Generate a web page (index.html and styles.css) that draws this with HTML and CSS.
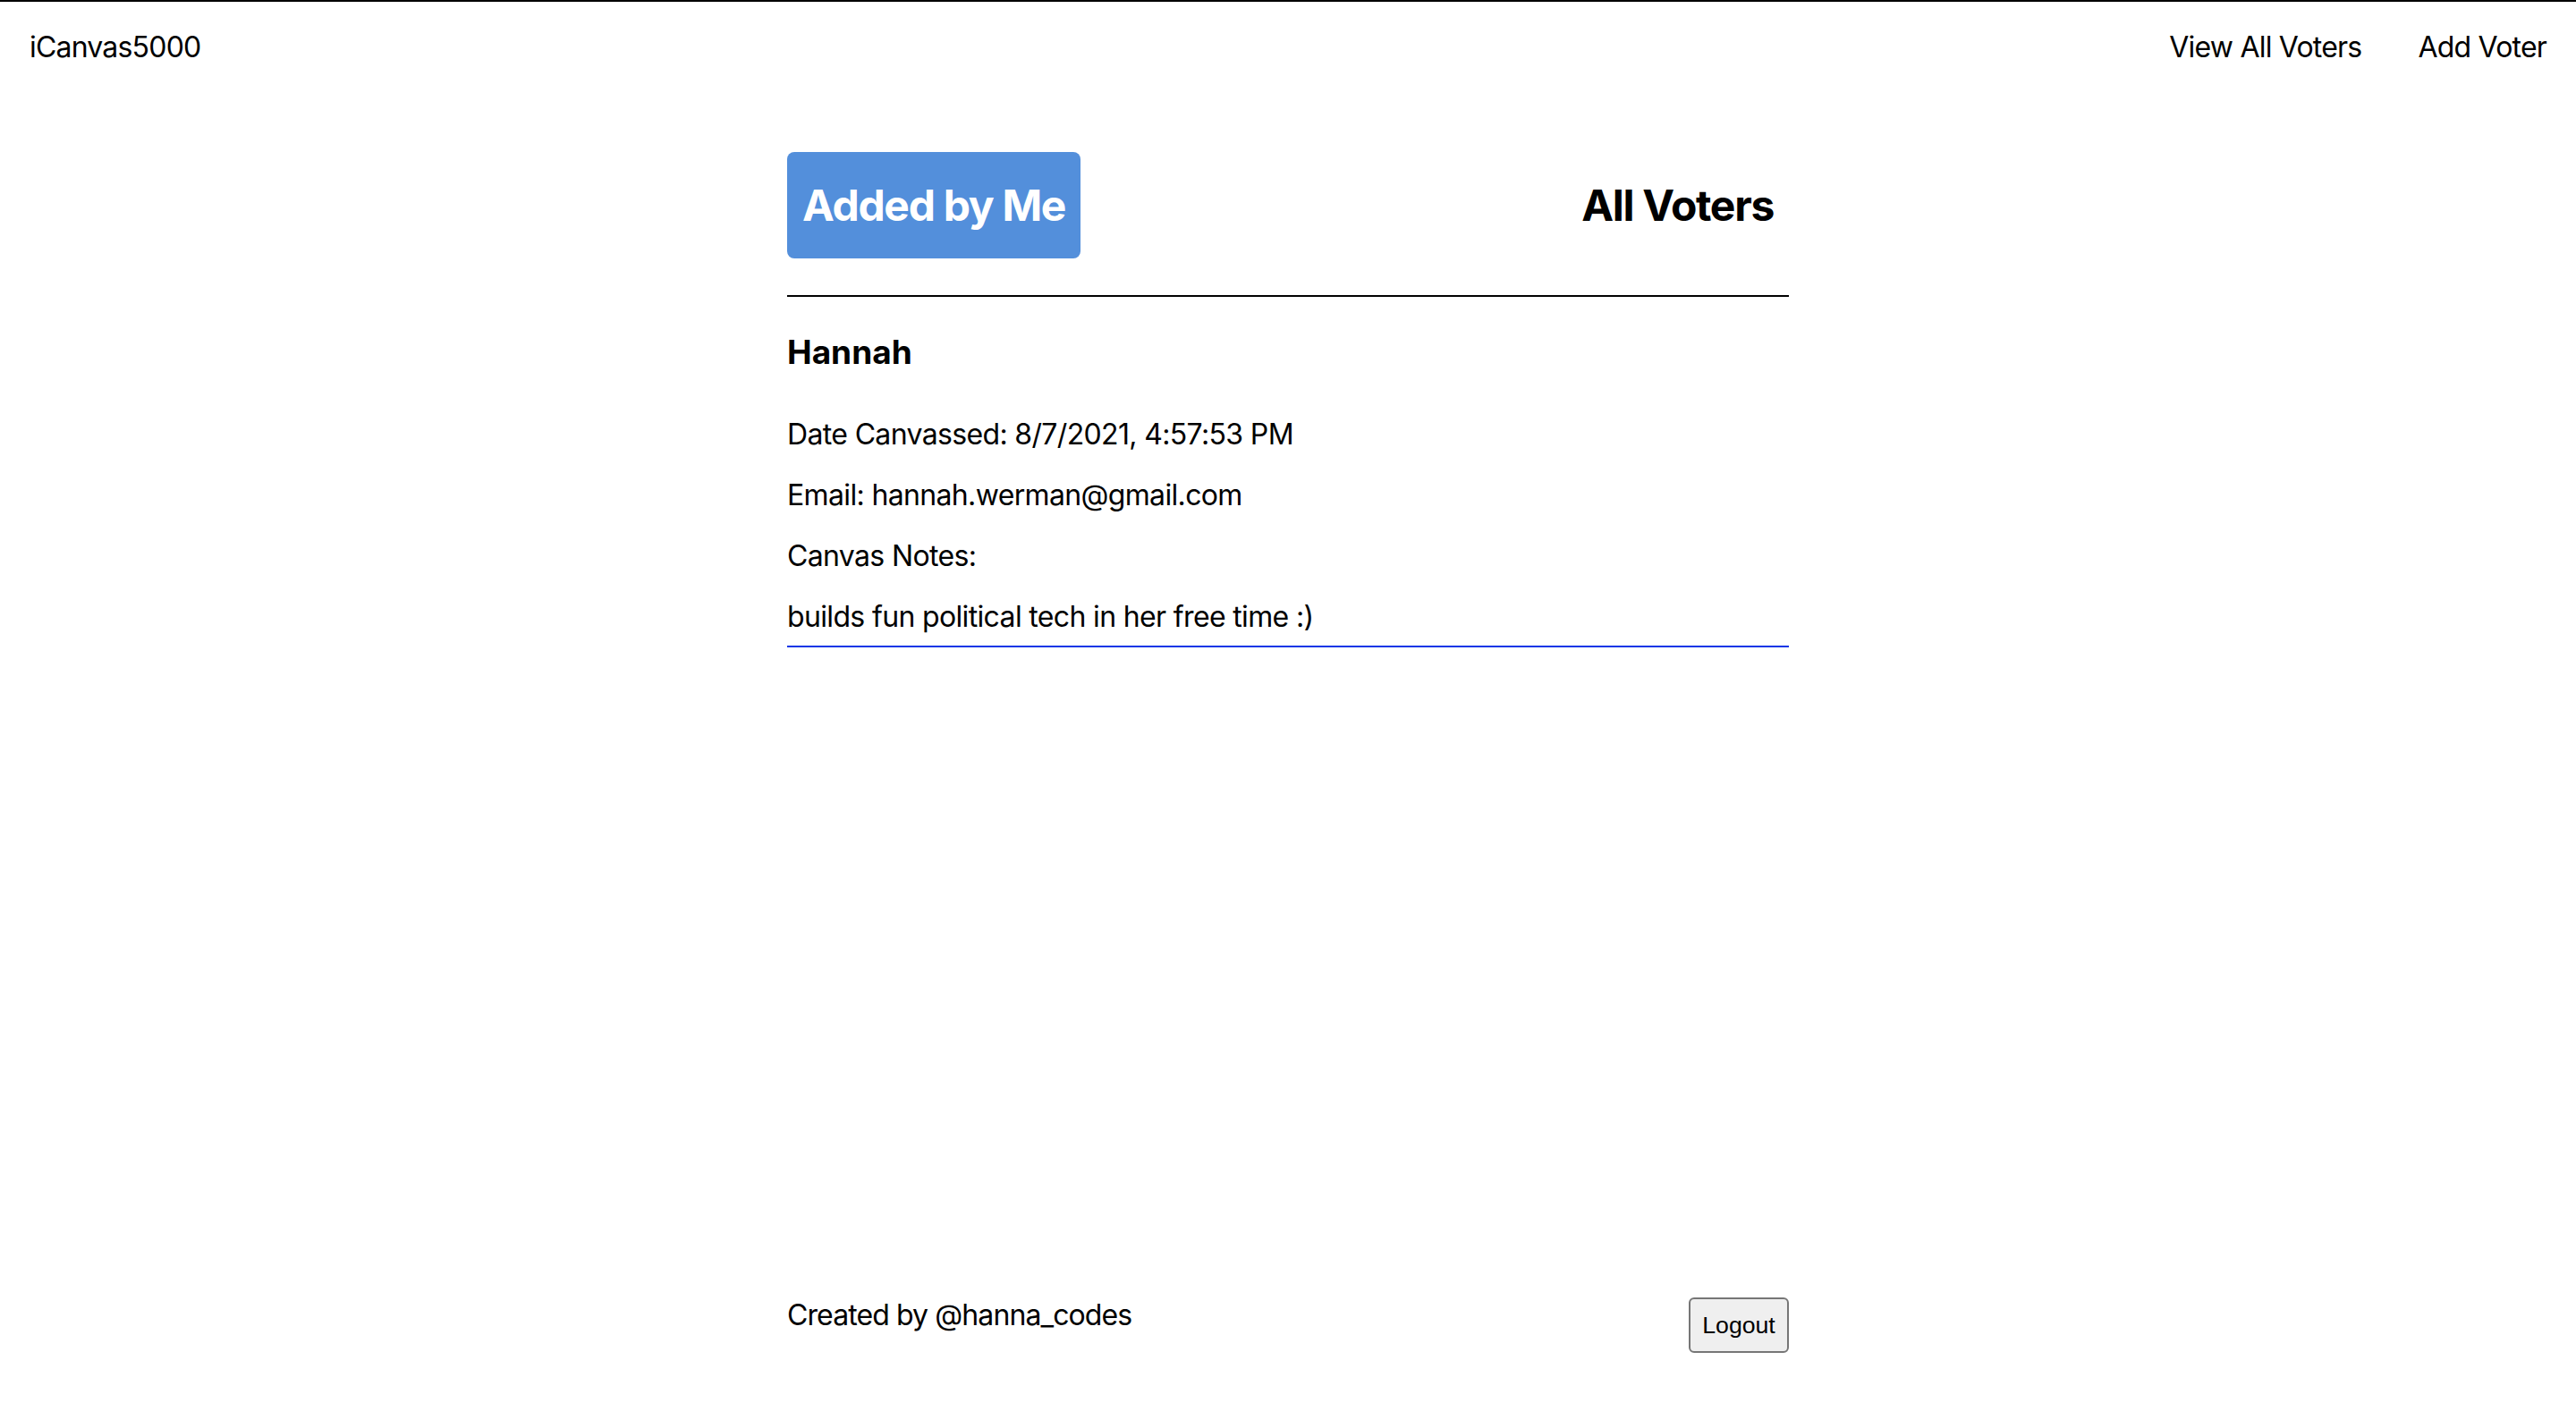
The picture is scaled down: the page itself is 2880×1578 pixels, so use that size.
FILE: index.html
```html
<!DOCTYPE html>
<html lang="en">
<head>
<meta charset="utf-8">
<title>iCanvas5000</title>
<link rel="stylesheet" href="styles.css">
</head>
<body>
<div class="app">
  <nav class="nav">
    <a class="brand" href="#">iCanvas5000</a>
    <div class="nav-links">
      <a href="#">View All Voters</a>
      <a href="#">Add Voter</a>
    </div>
  </nav>
  <main class="main">
    <div class="tabs">
      <button class="tab tab-active">Added by Me</button>
      <button class="tab">All Voters</button>
    </div>
    <section class="voter">
      <h3 class="voter-name">Hannah</h3>
      <p>Date Canvassed: 8/7/2021, 4:57:53 PM</p>
      <p>Email: hannah.werman@gmail.com</p>
      <p>Canvas Notes:</p>
      <p class="notes">builds fun political tech in her free time :)</p>
    </section>
  </main>
  <footer class="footer">
    <p class="credit">Created by @hanna_codes</p>
    <button class="logout">Logout</button>
  </footer>
</div>
</body>
</html>
```

FILE: styles.css
```css
* { box-sizing: border-box; }
html, body { margin: 0; padding: 0; }
body {
  font-family: Inter, "Noto Sans", sans-serif;
  color: #000;
  background: #fff;
  border-top: 2px solid #000;
}
.app {
  min-height: calc(100vh - 2px);
  display: flex;
  flex-direction: column;
}
.nav {
  display: flex;
  justify-content: space-between;
  align-items: flex-start;
  padding: 31px 33px 0 33px;
  font-size: 32px;
  line-height: 39px;
  letter-spacing: -0.8px;
}
.nav a { color: #000; text-decoration: none; }
.nav-links { display: flex; gap: 63px; }
.main {
  width: 1120px;
  margin: 0 auto;
  padding-top: 98px;
}
.tabs {
  display: flex;
  justify-content: space-between;
  align-items: center;
  padding-bottom: 41px;
  border-bottom: 2px solid #000;
}
.tab {
  font-family: Inter, "Noto Sans", sans-serif;
  font-size: 48px;
  font-weight: 700;
  line-height: 59px;
  letter-spacing: -1.3px;
  padding: 30px 17px;
  border: none;
  border-radius: 8px;
  background: transparent;
  color: #000;
}
.tab-active { background: #538fdb; color: #fff; }
.voter { border-bottom: 2px solid #0a36e6; padding-bottom: 15px; }
.voter-name {
  font-size: 37px;
  line-height: 45px;
  font-weight: 700;
  margin: 39px 0 52px;
}
.voter p {
  font-size: 32px;
  line-height: 35px;
  letter-spacing: -0.65px;
  margin: 33px 0;
}
.voter .notes { margin-bottom: 0; }
.footer {
  width: 1120px;
  margin: auto auto 65px;
  display: flex;
  justify-content: space-between;
  align-items: flex-start;
}
.credit {
  margin: 0;
  font-size: 32px;
  line-height: 39px;
  letter-spacing: -0.9px;
}
.logout {
  width: 112px;
  height: 62px;
  padding: 0;
  font-family: "Liberation Sans", Arial, sans-serif;
  font-size: 26.67px;
  color: #000;
  background: #efefef;
  border: 2px solid #767676;
  border-radius: 6px;
}
```
